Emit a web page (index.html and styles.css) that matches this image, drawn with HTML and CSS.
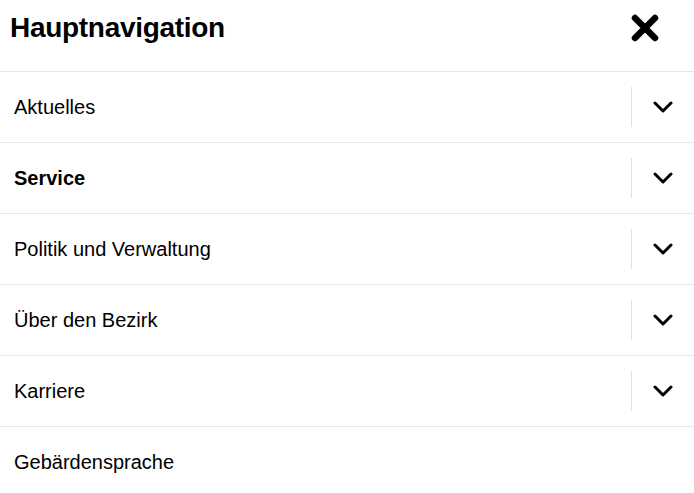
FILE: index.html
```html
<!DOCTYPE html>
<html lang="de">
<head>
    <meta charset="UTF-8">
    <meta name="viewport" content="width=device-width, initial-scale=1.0">
    <title>Hauptnavigation</title>
    <link rel="stylesheet" href="styles.css">
</head>
<body>
    <nav class="main-nav">
        <div class="nav-header">
            <h2>Hauptnavigation</h2>
            <button class="nav-close" aria-label="Schließen">
                <svg width="32" height="32" viewBox="0 0 32 32">
                    <path d="M6 6 L26 26 M26 6 L6 26" stroke="#000" stroke-width="6.5" stroke-linecap="round" fill="none"/>
                </svg>
            </button>
        </div>
        <ul class="nav-list">
            <li class="nav-item">
                <a href="#">Aktuelles</a>
                <button class="nav-toggle" aria-label="Aufklappen">
                    <svg width="20" height="12" viewBox="0 0 20 12"><path d="M2 2 L10 10 L18 2" stroke="#000" stroke-width="3" stroke-linecap="round" stroke-linejoin="round" fill="none"/></svg>
                </button>
            </li>
            <li class="nav-item active">
                <a href="#">Service</a>
                <button class="nav-toggle" aria-label="Aufklappen">
                    <svg width="20" height="12" viewBox="0 0 20 12"><path d="M2 2 L10 10 L18 2" stroke="#000" stroke-width="3" stroke-linecap="round" stroke-linejoin="round" fill="none"/></svg>
                </button>
            </li>
            <li class="nav-item">
                <a href="#">Politik und Verwaltung</a>
                <button class="nav-toggle" aria-label="Aufklappen">
                    <svg width="20" height="12" viewBox="0 0 20 12"><path d="M2 2 L10 10 L18 2" stroke="#000" stroke-width="3" stroke-linecap="round" stroke-linejoin="round" fill="none"/></svg>
                </button>
            </li>
            <li class="nav-item">
                <a href="#">Über den Bezirk</a>
                <button class="nav-toggle" aria-label="Aufklappen">
                    <svg width="20" height="12" viewBox="0 0 20 12"><path d="M2 2 L10 10 L18 2" stroke="#000" stroke-width="3" stroke-linecap="round" stroke-linejoin="round" fill="none"/></svg>
                </button>
            </li>
            <li class="nav-item">
                <a href="#">Karriere</a>
                <button class="nav-toggle" aria-label="Aufklappen">
                    <svg width="20" height="12" viewBox="0 0 20 12"><path d="M2 2 L10 10 L18 2" stroke="#000" stroke-width="3" stroke-linecap="round" stroke-linejoin="round" fill="none"/></svg>
                </button>
            </li>
            <li class="nav-item">
                <a href="#">Gebärdensprache</a>
            </li>
        </ul>
    </nav>
</body>
</html>
```

FILE: styles.css
```css
body {
    font-family: "Liberation Sans", Arial, sans-serif;
    margin: 0;
    background-color: #fff;
    color: #000;
}
.main-nav {
    width: 100%;
}
.nav-header {
    height: 72px;
    box-sizing: border-box;
    border-bottom: 1px solid #e6e6e6;
    display: flex;
    align-items: center;
    justify-content: space-between;
    padding: 0 33px 15px 10px;
}
.nav-header h2 {
    margin: 0;
    font-size: 28px;
    letter-spacing: -0.3px;
    font-weight: bold;
    line-height: 1;
}
.nav-close {
    background: none;
    border: none;
    padding: 0;
    width: 32px;
    height: 32px;
    cursor: pointer;
}
.nav-close svg {
    display: block;
}
.nav-list {
    list-style: none;
    margin: 0;
    padding: 0;
}
.nav-item {
    height: 71px;
    box-sizing: border-box;
    border-bottom: 1px solid #e6e6e6;
    display: flex;
    align-items: center;
    justify-content: space-between;
}
.nav-item:last-child {
    border-bottom: none;
}
.nav-item a {
    color: #000;
    text-decoration: none;
    font-size: 20px;
    padding-left: 14px;
}
.nav-item.active a {
    font-weight: bold;
}
.nav-toggle {
    background: none;
    border: none;
    border-left: 1px solid #e0e0e0;
    height: 40px;
    width: 63px;
    padding: 0;
    display: flex;
    align-items: center;
    justify-content: center;
    cursor: pointer;
}
.nav-toggle svg {
    display: block;
}
```
